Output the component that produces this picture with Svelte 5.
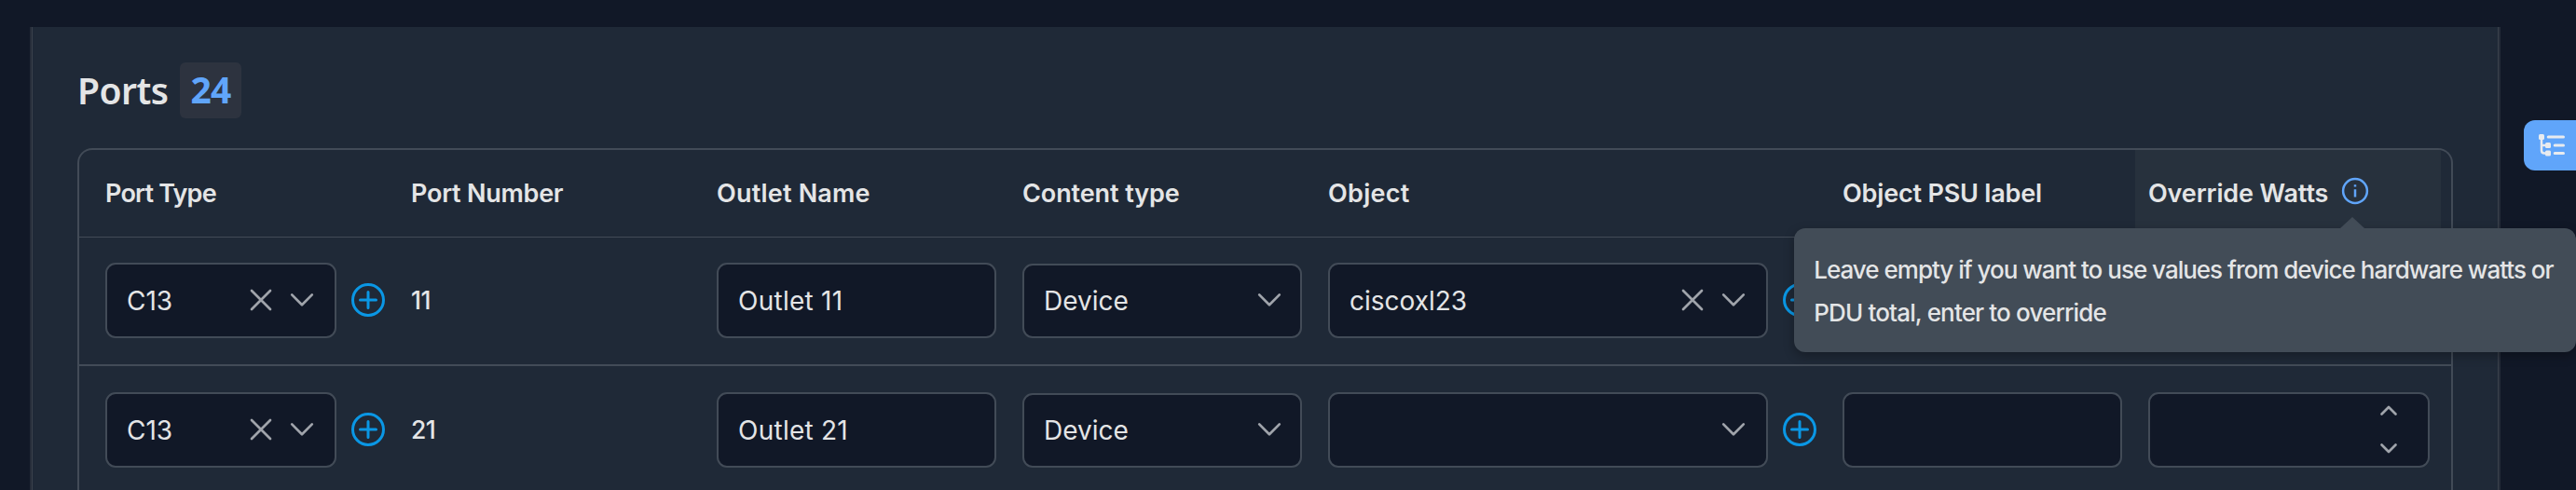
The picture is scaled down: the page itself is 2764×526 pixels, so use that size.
<script>
  const columns = [
    { label: 'Port Type', ls: -0.8 },
    { label: 'Port Number', ls: -0.25 },
    { label: 'Outlet Name', ls: 0.2 },
    { label: 'Content type', ls: -0.1 },
    { label: 'Object', ls: 0.3 },
    { label: 'Object PSU label', ls: -0.18 },
    { label: 'Override Watts', ls: -0.13, info: true }
  ];
  const rows = [
    { type: 'C13', number: '11', outlet: 'Outlet 11', content: 'Device', object: 'ciscoxl23' },
    { type: 'C13', number: '21', outlet: 'Outlet 21', content: 'Device', object: '' }
  ];
</script>

{#snippet clear()}
  <svg class="clear" width="24" height="24" viewBox="0 0 24 24"><path d="M2 2 22 22M22 2 2 22" /></svg>
{/snippet}
{#snippet chevron()}
  <svg class="chevron" width="26" height="16" viewBox="0 0 26 16"><path d="M2.2 2.4 13 13.2 23.8 2.4" /></svg>
{/snippet}
{#snippet plus()}
  <svg class="plus" width="36" height="36" viewBox="0 0 36 36"><circle cx="18" cy="18" r="16.5" /><path d="M18 9.5V26.5M9.5 18H26.5" /></svg>
{/snippet}

<div class="page">
  <section class="panel">
    <h2><span class="title">Ports</span><span class="badge">24</span></h2>
    <div class="table">
      <div class="row head">
        {#each columns as c}
          <div class="cell" class:active={c.info}>
            <span style="letter-spacing:{c.ls}px">{c.label}</span>
            {#if c.info}
              <span class="info">
                <svg width="30" height="30" viewBox="0 0 30 30"><circle cx="15" cy="15" r="12.9" /><path d="M15 13.2V21.4M15 8.3V10.6" /></svg>
                <span class="tooltip">Leave empty if you want to use values from device hardware watts or<br /><span class="second">PDU total, enter to override</span></span>
              </span>
            {/if}
          </div>
        {/each}
      </div>
      {#each rows as r}
        <div class="row body">
          <div class="cell">
            <div class="field"><span>{r.type}</span>{@render clear()}{@render chevron()}</div>
            {@render plus()}
          </div>
          <div class="cell number">{r.number}</div>
          <div class="cell"><div class="field"><span class="loose">{r.outlet}</span></div></div>
          <div class="cell"><div class="field short"><span>{r.content}</span>{@render chevron()}</div></div>
          <div class="cell wide">
            <div class="field"><span>{r.object}</span>{#if r.object}{@render clear()}{/if}{@render chevron()}</div>
            {@render plus()}
          </div>
          <div class="cell"><div class="field"></div></div>
          <div class="cell last">
            <div class="field spin">
              <svg width="20" height="52" viewBox="0 0 20 52"><path d="M2.5 9.5 10 2 17.5 9.5M2.5 42.5 10 50 17.5 42.5" /></svg>
            </div>
          </div>
        </div>
      {/each}
    </div>
  </section>
  <button class="side" aria-label="tree">
    <svg width="30" height="26" viewBox="0 0 30 26">
      <g class="nodes"><rect x="1" y="1" width="6" height="6" rx="1.5" /><rect x="8" y="10" width="6" height="6" rx="1.5" /><rect x="8" y="18.5" width="6" height="6" rx="1.5" /></g>
      <path class="thin" d="M4 4V18.5Q4 21.5 7 21.5H10M4 13H10" />
      <path class="bar" d="M11.2 4H27.5M18.2 13H27.5M18.2 21.5H27.5" />
    </svg>
  </button>
</div>

<style>
  :global(body) { background: #111827; overflow: hidden; }
  * { box-sizing: border-box; }
  .page {
    height: 526px;
    padding: 29px 0 0 34px;
    display: flex;
    align-items: flex-start;
    overflow: hidden;
    font-family: Inter, sans-serif;
    font-size: 28px;
    color: #e4e5e6;
    position: relative;
  }
  .panel {
    width: 2647px;
    height: 520px;
    flex: none;
    background: #1f2937;
    border: 1px solid #3a414c;
    border-width: 0 1px;
    box-shadow: -2px 0 0 #252c39, 2px 0 0 #252c39;
    padding: 38px 48px 0;
  }
  h2 { margin: 0; height: 60px; display: flex; align-items: center; font: 600 39px/58px "Noto Sans", sans-serif; }
  .title { width: 110px; letter-spacing: -0.5px; }
  .badge { width: 66px; height: 60px; border-radius: 6px; background: #2d333f; color: #60a5fa; font-weight: 700; text-align: center; letter-spacing: -0.8px; }
  .table {
    margin-top: 32px;
    width: 2549px;
    height: 420px;
    border: 2px solid #424b57;
    border-radius: 16px 16px 0 0;
    border-bottom: 0;
  }
  .row {
    display: grid;
    grid-template-columns: 328px 328px 328px 328px 552px 328px 328px;
    padding-left: 14px;
  }
  .head { height: 94px; border-bottom: 1px solid #424b57; font-weight: 600; font-size: 27px; }
  .head .cell { display: flex; align-items: center; padding: 0 14px; white-space: nowrap; }
  .head .active { background: #27313d; }
  .body { height: 139px; border-bottom: 2px solid #424b57; padding-top: 28px; }
  .head + .body { height: 138px; padding-top: 27px; }
  .body .cell { height: 81px; display: flex; align-items: center; gap: 16px; padding: 0 14px; }
  .body .last { padding-right: 12px; }
  .body .number { font-weight: 500; font-size: 26.5px; letter-spacing: -0.6px; padding-bottom: 1px; }
  .field {
    flex: 1;
    height: 81px;
    border: 2px solid #424b57;
    border-radius: 11px;
    background: #111827;
    display: flex;
    align-items: center;
    padding: 0 22px 1px 21px;
  }
  .field.short { height: 80px; margin-top: 1px; padding-right: 20px; padding-bottom: 2px; }
  .field span { flex: 1; padding-top: 2px; }
  .field .loose { letter-spacing: 0.25px; }
  svg { flex: none; fill: none; display: block; }
  .clear, .chevron, .spin svg { stroke: #a0a4ab; stroke-width: 2.7; stroke-linecap: round; stroke-linejoin: round; }
  .clear { margin-right: 19px; }
  .plus { stroke: #0a97e5; stroke-width: 3; stroke-linecap: round; margin-bottom: 1px; }
  .field.spin { justify-content: flex-end; padding-right: 32px; }
  .info { position: relative; top: -3px; margin-left: 14px; }
  .info svg { stroke: #60a5fa; stroke-width: 2.5; }
  .tooltip {
    position: absolute;
    z-index: 2;
    top: 55px;
    right: -222px;
    width: 839px;
    height: 133px;
    padding: 22px 0 18px 21px;
    border-radius: 12px;
    background: #424c57;
    box-shadow: 0 4px 12px rgba(0, 0, 0, 0.3);
    font-weight: 500;
    font-size: 26px;
    line-height: 46px;
    letter-spacing: -1px;
  }
  .second { letter-spacing: -0.85px; }
  .tooltip::before {
    content: "";
    position: absolute;
    right: 227px;
    top: -12px;
    border: 13px solid transparent;
    border-top: 0;
    border-bottom: 12px solid #424c57;
  }
  .side {
    position: absolute;
    right: 0;
    top: 129px;
    width: 56px;
    height: 54px;
    padding: 0 0 0 15px;
    border: 0;
    border-radius: 12px 0 0 12px;
    background: #60a5fa;
  }
  .nodes { fill: #e8ebef; }
  .thin { stroke: #e8ebef; stroke-width: 2.5; }
  .bar { stroke: #e8ebef; stroke-width: 3; stroke-linecap: round; }
</style>
